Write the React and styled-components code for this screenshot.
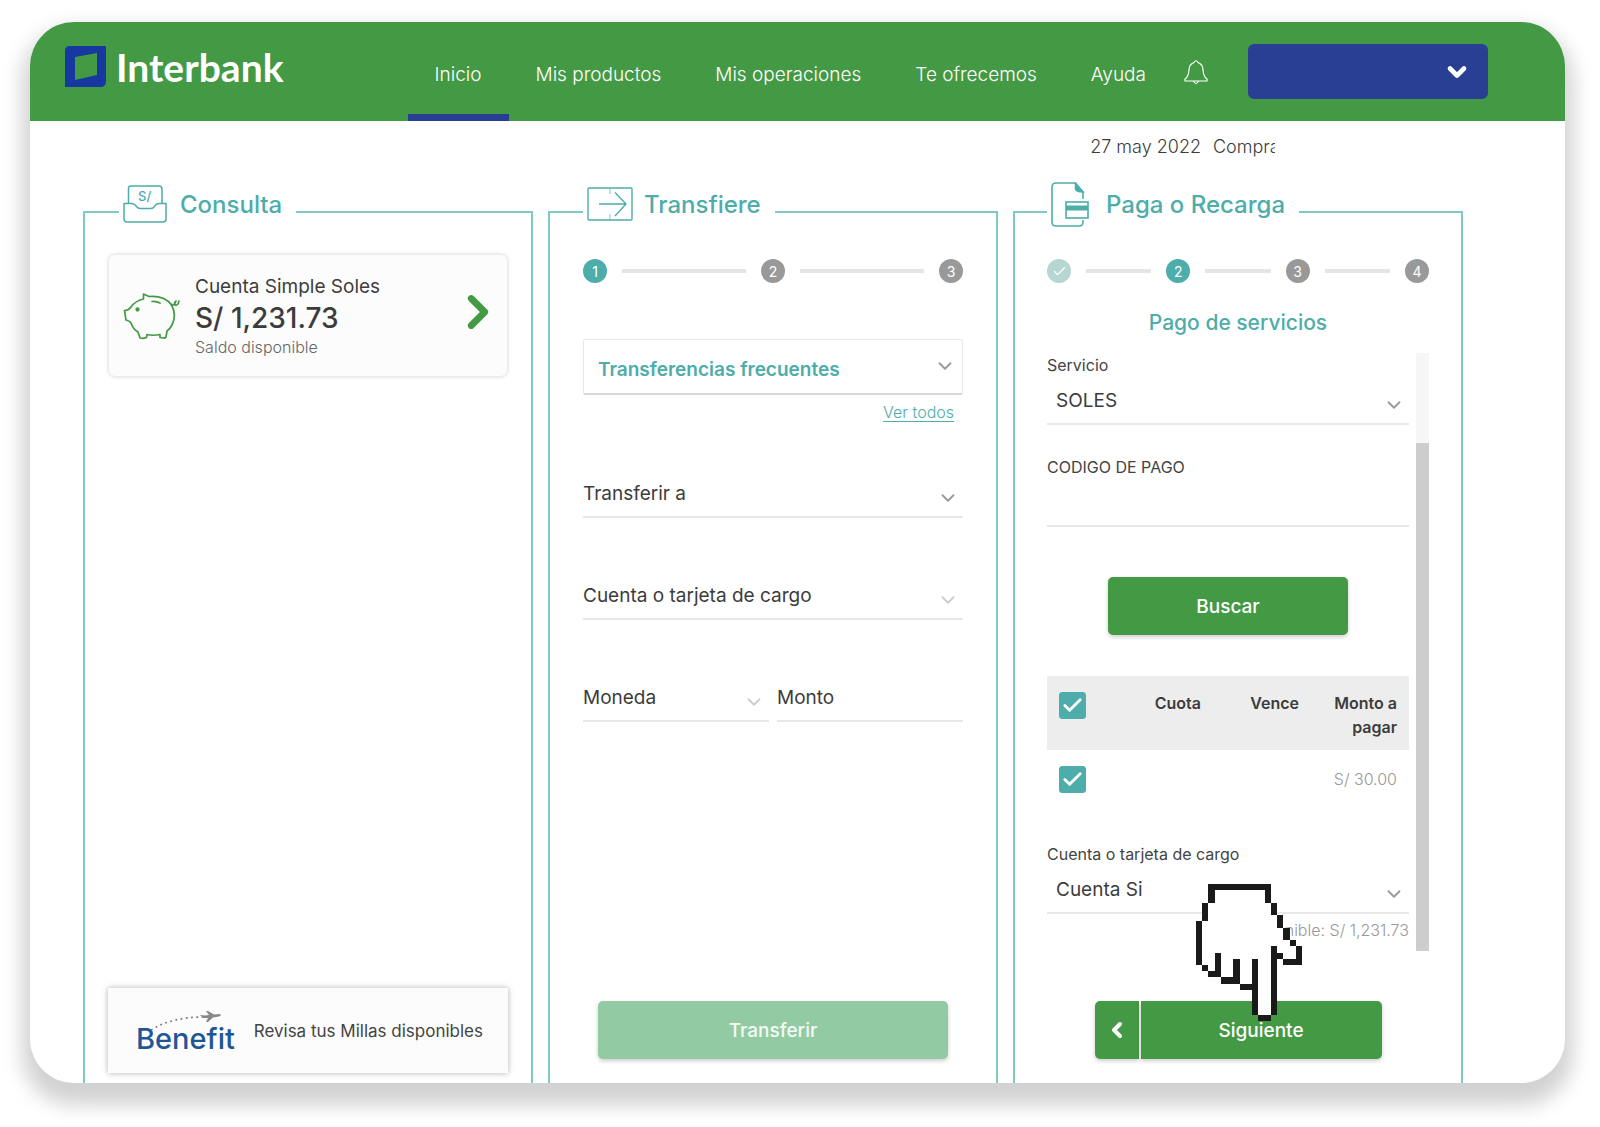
import { useState } from "react"
import styled, { createGlobalStyle } from "styled-components"
import { ChevronDown, ChevronLeft, ChevronRight, Check } from "lucide-react"

const teal = "#4dadaa"
const green = "#449945"
const blue = "#283f93"

const GlobalStyle = createGlobalStyle`
    * {
        box-sizing: border-box;
    }
    body {
        margin: 0;
        background-color: #fff;
        color: #3c3c3c;
        font-family: Inter, "Liberation Sans", sans-serif;
        font-size: 19px;
    }
    button, input, select {
        font: inherit;
        color: inherit;
    }
`

const Page = styled.div`
    min-height: 100vh;
    padding: 22px 35px 44px 30px;
    display: flex;
`

const Frame = styled.div`
    flex: 1;
    min-width: 0;
    display: flex;
    flex-direction: column;
    border-radius: 44px;
    background-color: #fff;
    box-shadow: 0 14px 20px 8px rgba(0, 0, 0, .18);
    overflow: hidden;
`

const Header = styled.header`
    height: 99px;
    padding: 0 77px 0 35px;
    display: flex;
    align-items: center;
    background-color: ${green};
    color: #fff;
`

const Brand = styled.a`
    display: flex;
    align-items: center;
    gap: 10px;
    padding-bottom: 10px;
    color: #fff;
    font-family: Lato, sans-serif;
    font-size: 39px;
    font-weight: 700;
    line-height: 40px;
    text-decoration: none;
`

const Nav = styled.nav`
    height: 100%;
    margin-left: auto;
    display: flex;
`

const NavLink = styled.a`
    padding: 0 27px;
    display: flex;
    align-items: center;
    padding-top: 12px;
    border-bottom: 7px solid ${({ $active }) => ($active ? blue : "transparent")};
    color: #fff;
    font-weight: 300;
    text-decoration: none;
`

const BellButton = styled.button`
    margin: 0 39px 0 10px;
    padding: 0;
    border: 0;
    display: flex;
    background: none;
`

const UserButton = styled.button`
    width: 240px;
    height: 55px;
    padding: 0 17px;
    display: flex;
    align-items: center;
    justify-content: flex-end;
    border: 0;
    border-radius: 6px;
    background-color: ${blue};
    color: #fff;
`

const DateRow = styled.div`
    padding: 14px 290px 0 0;
    display: flex;
    justify-content: flex-end;
    gap: 12px;
    font-size: 18px;
    font-weight: 300;
    line-height: 24px;
`

const Clipped = styled.span`
    width: 62px;
    overflow: hidden;
`

const Panels = styled.main`
    flex: 1;
    padding: 25px 102px 0 53px;
    display: grid;
    grid-template-columns: repeat(3, minmax(0, 1fr));
    gap: 15px;
`

const Panel = styled.fieldset`
    min-width: 0;
    margin: 0;
    padding: 15px ${({ $side }) => $side}px ${({ $bottom }) => $bottom}px;
    display: flex;
    flex-direction: column;
    border: 2px solid #7fcac7;
    border-bottom: 0;
`

const PanelTitle = styled.legend`
    height: 56px;
    margin-left: ${({ $indent }) => $indent}px;
    padding: 0 14px 16px 4px;
    display: flex;
    align-items: center;
    gap: ${({ $gap }) => $gap}px;
    color: ${teal};
    font-size: 24px;
    font-weight: 500;
`

const AccountCard = styled.button`
    height: 121px;
    padding: 0 2px 0 14px;
    display: flex;
    align-items: center;
    gap: 15px;
    border: 0;
    border-radius: 6px;
    background-color: #fcfcfc;
    box-shadow: 0 0 5px rgba(0, 0, 0, .2);
    text-align: left;

    > svg:last-child {
        margin-bottom: 8px;
    }
`

const AccountText = styled.span`
    flex: 1;
    display: flex;
    flex-direction: column;
`

const AccountName = styled.span`
    line-height: 28px;
`

const Amount = styled.span`
    font-size: 28px;
    font-weight: 500;
    line-height: 34px;
`

const Small = styled.span`
    color: #666;
    font-size: 16px;
    font-weight: 300;
    line-height: 24px;
`

const BenefitCard = styled.a`
    height: 85px;
    margin: auto -1px 0;
    padding: 0 25px 0 28px;
    display: flex;
    align-items: center;
    justify-content: space-between;
    background-color: #fcfcfc;
    box-shadow: 0 0 6px rgba(0, 0, 0, .3);
    color: #444;
    font-size: 17px;
    text-decoration: none;
`

const BenefitLogo = styled.span`
    position: relative;
    padding-top: 16px;
    color: #205598;
    font-size: 29px;
    font-weight: 500;
    line-height: 32px;

    svg {
        position: absolute;
        top: 3px;
        left: 12px;
    }
`

const StepList = styled.ol`
    margin: 4px 0 0;
    padding: 0;
    display: flex;
    align-items: center;
    gap: 15px;
    list-style: none;
`

const Step = styled.li`
    width: 24px;
    height: 24px;
    display: flex;
    align-items: center;
    justify-content: center;
    border-radius: 50%;
    background-color: ${({ $state }) => ({ done: "#b5d6d2", active: teal })[$state] || "#999"};
    color: #fff;
    font-size: 14px;
`

const StepLine = styled.li`
    flex: 1;
    height: 4px;
    background-color: #e5e5e5;
`

const SelectWrap = styled.div`
    display: grid;
    align-items: center;

    > * {
        grid-area: 1 / 1;
    }
    > svg {
        justify-self: end;
        margin: 8px 4px 0 0;
        pointer-events: none;
    }
`

const fieldStyle = `
    width: 100%;
    min-width: 0;
    height: 48px;
    border: 0;
    border-bottom: 2px solid #e8e8e8;
    border-radius: 0;
    background: none;
    appearance: none;
    outline: none;
`

const Select = styled.select`
    ${fieldStyle}
    padding: 1px ${({ $inset }) => ($inset ? 9 : 0)}px 0;
`

const TextInput = styled.input`
    ${fieldStyle}
    padding: 1px 0 0;

    &::placeholder {
        color: #3c3c3c;
        opacity: 1;
    }
`

const FrequentSelect = styled.select`
    width: 100%;
    height: 56px;
    padding: 6px 14px 0;
    border: 1px solid #e9e9e9;
    border-bottom: 2px solid #d8d8d8;
    border-radius: 2px;
    background-color: #fff;
    color: ${teal};
    font-weight: 600;
    appearance: none;
`

const FrequentBox = styled(SelectWrap)`
    margin-top: 56px;

    > svg {
        margin: 0 7px 2px 0;
    }
`

const SeeAll = styled.a`
    align-self: flex-end;
    margin: 5px 9px 0 0;
    color: ${teal};
    font-size: 16px;
    font-weight: 300;
    line-height: 24px;
    text-underline-offset: 3px;
`

const TransferFields = styled.div`
    margin-top: 46px;
    display: flex;
    flex-direction: column;
    gap: 54px;
`

const FieldPair = styled.div`
    display: grid;
    grid-template-columns: 1fr 1fr;
    gap: 8px;
`

const Button = styled.button`
    height: 58px;
    padding: 0;
    border: 0;
    border-radius: 5px;
    background-color: ${green};
    box-shadow: 0 2px 4px rgba(0, 0, 0, .2);
    color: #fff;
    font-weight: 500;
`

const TransferButton = styled(Button)`
    margin: auto 15px 0;

    &:disabled {
        background-color: #92cba3;
        color: #f4fbf5;
    }
`

const ServiceTitle = styled.h3`
    margin: 26px 0 16px;
    color: ${teal};
    font-size: 21px;
    font-weight: 500;
    line-height: 28px;
    text-align: center;
`

const Scroller = styled.div`
    height: 598px;
    display: flex;
    gap: 7px;
`

const ScrollContent = styled.div`
    flex: 1;
    min-width: 0;
    display: flex;
    flex-direction: column;
`

const ScrollTrack = styled.div`
    width: 13px;
    display: flex;
    align-items: flex-end;
    background-color: #f6f6f6;
`

const ScrollThumb = styled.div`
    width: 100%;
    height: 85%;
    background-color: #cdcdcd;
`

const Field = styled.div`
    margin-top: ${({ $top }) => $top || 0}px;
`

const Label = styled.label`
    display: block;
    color: #444;
    font-size: 16px;
    line-height: 24px;
`

const SearchButton = styled(Button)`
    width: 240px;
    margin: 50px auto 41px;
`

const FeeTable = styled.table`
    width: 100%;
    border-collapse: collapse;
    table-layout: fixed;
    font-size: 16px;
    line-height: 24px;

    th, td {
        padding: 15px 12px 11px 0;
        text-align: right;
        vertical-align: top;
    }
    th:first-child, td:first-child {
        width: 68px;
        padding: 16px 0 0 12px;
    }
    th {
        background-color: #ededed;
        font-weight: 600;
    }
    td {
        padding-top: 17px;
        color: #999;
        font-weight: 300;
    }
`

const CheckLabel = styled.label`
    width: 27px;
    height: 27px;
    display: grid;
    place-items: center;

    > * {
        grid-area: 1 / 1;
    }
    > svg {
        color: #fff;
        pointer-events: none;
    }
`

const CheckInput = styled.input`
    width: 27px;
    height: 27px;
    margin: 0;
    border: 1px solid ${teal};
    border-radius: 3px;
    background-color: #fff;
    appearance: none;

    &:checked {
        background-color: ${teal};
    }
`

const Available = styled(Small)`
    margin-top: 4px;
    color: #999;
    text-align: right;
`

const Actions = styled.div`
    margin: auto auto 0;
    position: relative;
    display: flex;
    gap: 2px;
`

const BackButton = styled(Button)`
    width: 44px;
    display: flex;
    align-items: center;
    justify-content: center;
    border-radius: 5px 0 0 5px;
`

const NextButton = styled(Button)`
    width: 241px;
    border-radius: 0 5px 5px 0;
`

const Pointer = styled.svg`
    position: absolute;
    top: -117px;
    left: 101px;
    pointer-events: none;
`

const LogoMark = () => (
    <svg width="41" height="41" viewBox="0 0 41 41" aria-hidden="true">
        <path fill="#1638a0" fillRule="evenodd" d="M5 0H41V35Q41 41 35 41H0V5Q0 0 5 0ZM10 11V34L32 29V7Z" />
    </svg>
)

const BellIcon = () => (
    <svg width="26" height="26" viewBox="0 0 26 26" fill="none" stroke="#fff" strokeWidth="1.2" strokeLinejoin="round">
        <path d="M11 3.500Q13 0 15 3.500Q20 5.500 20 11Q20.500 18 24 20V22H2V20Q5.500 18 6 11Q6 5.500 11 3.500Z" />
        <path d="M10.500 22Q13 27 15.500 22" />
    </svg>
)

const InboxIcon = () => (
    <svg width="44" height="38" viewBox="0 0 44 38" fill="none" stroke={teal} strokeWidth="1.5" strokeLinejoin="round">
        <path d="M5.500 18V3Q5.500 1 8 1H36Q39 1 39 4V18" />
        <path d="M1 18.500H9Q12 19 14 22Q15 23.500 18 23.500H27Q30 23.500 31 22Q33 18.500 36 18.500H43V34Q43 37 40 37H4Q1 37 1 34Z" />
        <text x="15" y="16" fill={teal} stroke="none" fontSize="13" fontWeight="500">S/</text>
    </svg>
)

const TransferIcon = () => (
    <svg width="46" height="34" viewBox="0 0 46 34" fill="none" stroke={teal} strokeWidth="1.4">
        <rect x="1" y="1" width="44" height="32" rx="1" />
        <path d="M12 17H39M28 5.500L39 17L28 29" />
        <path d="M23 1V7M23 27V33" opacity=".5" />
    </svg>
)

const PayIcon = () => (
    <svg width="38" height="45" viewBox="0 0 38 45" fill="none" stroke={teal} strokeWidth="1.6">
        <path d="M32 17V10L24 1H5Q1 1 1 5V40Q1 44 5 44H28Q32 44 32 40V38" />
        <path d="M24.500 1V7Q25 9.500 32 10Z" fill={teal} />
        <rect x="15" y="20" width="22" height="16" fill="#fff" />
        <path d="M15 26H37" strokeWidth="5" />
    </svg>
)

const PigIcon = () => (
    <svg width="57" height="48" viewBox="0 0 57 48" fill="none" stroke={green} strokeWidth="1.7" strokeLinejoin="round" strokeLinecap="round">
        <path d="M20.500 2L26 4.500Q42 3.500 48.500 13Q54 23 49 33Q47 37 44 39L43 45Q42 46.500 40 46L37 45.500V42.500Q30 44 24 42.500L23.500 45.500Q20 47 17 46L15 40Q10 37 8 31Q7 29 3 28L1.500 18.500Q6 18 8 15Q12 9 20.500 7Z" />
        <path d="M29 9.500Q33 9 37 11" />
        <path d="M48 12Q51 15 53 9Q51 10 52 13Q55 14 56 9" />
        <circle cx="14.500" cy="17.500" r="1.300" fill={green} />
    </svg>
)

const PlaneTrail = () => (
    <svg width="74" height="24" viewBox="0 0 74 24" aria-hidden="true">
        <path d="M3 20Q24 7 55 7" fill="none" stroke="#777" strokeWidth="1.600" strokeDasharray="1.800 3.500" />
        <path d="M52 5L57 5.500L61 5L58 1H60L66 4.500L72 4Q74 5 71 6.500L65 7.500L60 12H58L60 8L55 8Z" fill="#888" />
    </svg>
)

const HandPointer = () => (
    <Pointer width="106" height="137" viewBox="0 0 17 22" preserveAspectRatio="none" shapeRendering="crispEdges" aria-hidden="true">
        <path fill="#fff" d="M2 0H12V3H13V5H14V7H15V9H16V10H17V13H14V12H13V21H12V22H10V21H9V17H7V16H4V15H2V14H1V13H0V6H1V3H2Z" />
        <path
            fill="#1a1a1a"
            d="M2 0H12V3H11V1H3V3H2ZM1 3H2V6H1ZM0 6H1V13H0ZM1 13H2V14H1ZM3 11H4V15H2V14H3ZM6 12H7V16H4V15H6ZM9 12H10V21H9V17H7V16H9ZM10 21H12V22H10ZM12 10H13V11H14V12H13V21H12ZM12 3H13V5H12ZM13 5H14V7H13ZM14 7H15V9H14ZM15 9H16V10H15ZM16 10H17V13H14V12H16Z"
        />
    </Pointer>
)

const Steps = ({ total, current }) => {
    const items = []
    for (let n = 1; n <= total; n++) {
        if (n > 1) items.push(<StepLine key={`line-${n}`} aria-hidden="true" />)
        const state = n < current ? "done" : n === current ? "active" : "next"
        items.push(
            <Step key={n} $state={state}>
                {state === "done" ? <Check size={15} /> : n}
            </Step>
        )
    }
    return <StepList>{items}</StepList>
}

const DropDown = ({ id, label, text, inset, color = "#999" }) => (
    <SelectWrap>
        <Select id={id} aria-label={label} $inset={inset}>
            <option>{text}</option>
        </Select>
        <ChevronDown size={22} color={color} />
    </SelectWrap>
)

const Tick = ({ label, checked, onChange }) => (
    <CheckLabel>
        <CheckInput type="checkbox" aria-label={label} checked={checked} onChange={onChange} />
        {checked && <Check size={23} strokeWidth={3} />}
    </CheckLabel>
)

const navItems = ["Inicio", "Mis productos", "Mis operaciones", "Te ofrecemos", "Ayuda"]

const TopBar = () => (
    <Header>
        <Brand href="#inicio">
            <LogoMark />
            Interbank
        </Brand>
        <Nav>
            {navItems.map((item, i) => (
                <NavLink key={item} href="#" $active={i === 0}>{item}</NavLink>
            ))}
        </Nav>
        <BellButton aria-label="Notificaciones">
            <BellIcon />
        </BellButton>
        <UserButton aria-label="Mi cuenta">
            <ChevronDown size={28} strokeWidth={4} />
        </UserButton>
    </Header>
)

const ConsultaPanel = () => (
    <Panel $side={24} $bottom={10}>
        <PanelTitle $indent={10} $gap={13}>
            <InboxIcon />
            Consulta
        </PanelTitle>
        <AccountCard>
            <PigIcon />
            <AccountText>
                <AccountName>Cuenta Simple Soles</AccountName>
                <Amount>S/ 1,231.73</Amount>
                <Small>Saldo disponible</Small>
            </AccountText>
            <ChevronRight size={54} strokeWidth={3} color={green} />
        </AccountCard>
        <BenefitCard href="#millas">
            <BenefitLogo>
                <PlaneTrail />
                Benefit
            </BenefitLogo>
            Revisa tus Millas disponibles
        </BenefitCard>
    </Panel>
)

const TransferPanel = () => (
    <Panel $side={33} $bottom={24}>
        <PanelTitle $indent={0} $gap={11}>
            <TransferIcon />
            Transfiere
        </PanelTitle>
        <Steps total={3} current={1} />
        <FrequentBox>
            <FrequentSelect aria-label="Transferencias frecuentes">
                <option>Transferencias frecuentes</option>
            </FrequentSelect>
            <ChevronDown size={22} color="#999" />
        </FrequentBox>
        <SeeAll href="#todos">Ver todos</SeeAll>
        <TransferFields>
            <DropDown label="Transferir a" text="Transferir a" />
            <DropDown label="Cuenta o tarjeta de cargo" text="Cuenta o tarjeta de cargo" color="#ccc" />
            <FieldPair>
                <DropDown label="Moneda" text="Moneda" color="#ccc" />
                <TextInput aria-label="Monto" placeholder="Monto" />
            </FieldPair>
        </TransferFields>
        <TransferButton disabled>Transferir</TransferButton>
    </Panel>
)

const PayPanel = () => {
    const [picked, setPicked] = useState(true)
    const toggle = () => setPicked(!picked)

    return (
        <Panel $side={32} $bottom={24}>
            <PanelTitle $indent={0} $gap={17}>
                <PayIcon />
                Paga o Recarga
            </PanelTitle>
            <Steps total={4} current={2} />
            <ServiceTitle>Pago de servicios</ServiceTitle>
            <Scroller>
                <ScrollContent>
                    <Field>
                        <Label htmlFor="servicio">Servicio</Label>
                        <DropDown id="servicio" text="SOLES" inset />
                    </Field>
                    <Field $top={30}>
                        <Label htmlFor="codigo">CODIGO DE PAGO</Label>
                        <TextInput id="codigo" />
                    </Field>
                    <SearchButton>Buscar</SearchButton>
                    <FeeTable>
                        <thead>
                            <tr>
                                <th><Tick label="Todas las cuotas" checked={picked} onChange={toggle} /></th>
                                <th>Cuota</th>
                                <th>Vence</th>
                                <th>Monto a pagar</th>
                            </tr>
                        </thead>
                        <tbody>
                            <tr>
                                <td><Tick label="Cuota de S/ 30.00" checked={picked} onChange={toggle} /></td>
                                <td />
                                <td />
                                <td>S/ 30.00</td>
                            </tr>
                        </tbody>
                    </FeeTable>
                    <Field $top={40}>
                        <Label htmlFor="cargo">Cuenta o tarjeta de cargo</Label>
                        <DropDown id="cargo" text="Cuenta Si" inset />
                    </Field>
                    <Available>Disponible: S/ 1,231.73</Available>
                </ScrollContent>
                <ScrollTrack>
                    <ScrollThumb />
                </ScrollTrack>
            </Scroller>
            <Actions>
                <BackButton aria-label="Volver">
                    <ChevronLeft size={24} strokeWidth={4} />
                </BackButton>
                <NextButton>Siguiente</NextButton>
                <HandPointer />
            </Actions>
        </Panel>
    )
}

const App = () => (
    <Page>
        <GlobalStyle />
        <Frame>
            <TopBar />
            <DateRow>
                <span>27 may 2022</span>
                <Clipped>Compra</Clipped>
            </DateRow>
            <Panels>
                <ConsultaPanel />
                <TransferPanel />
                <PayPanel />
            </Panels>
        </Frame>
    </Page>
)

export default App
